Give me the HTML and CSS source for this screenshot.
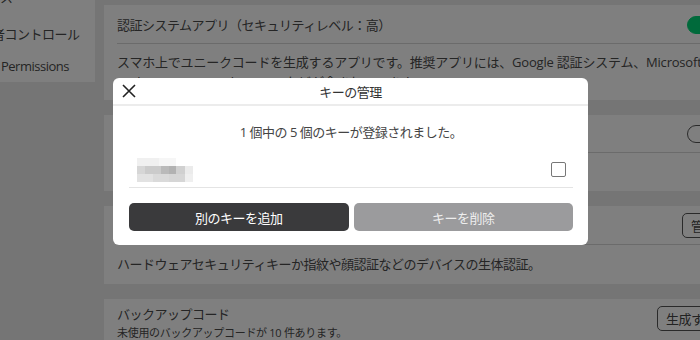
FILE: index.html
```html
<!DOCTYPE html>
<html lang="ja">
<head>
    <meta charset="UTF-8">
    <meta name="viewport" content="width=device-width, initial-scale=1.0">
    <title>キーの管理</title>
    <link rel="stylesheet" href="styles.css">
</head>
<body>
    <div class="page">
        <nav class="sidebar">
            <div class="nav-item top">ス</div>
            <div class="nav-item cut">保護者コントロール</div>
            <div class="nav-item">Permissions</div>
        </nav>

        <main class="content">
            <section class="card card-app">
                <div class="card-head">
                    <span class="card-title">認証システムアプリ（セキュリティレベル：高）</span>
                    <span class="toggle on"></span>
                </div>
                <p class="card-text">スマホ上でユニークコードを生成するアプリです。推奨アプリには、Google 認証システム、Microsoft Authenticator、Authy、Duo などが含まれています。</p>
            </section>

            <section class="card card-sms">
                <div class="card-head">
                    <span class="card-title">テキストメッセージ（セキュリティレベル：中）</span>
                    <span class="toggle"></span>
                </div>
                <p class="card-text">ログイン時に携帯電話へ確認コードを送信します。</p>
            </section>

            <section class="card card-keys">
                <div class="card-head">
                    <span class="card-title">セキュリティキー（セキュリティレベル：最高）</span>
                    <button class="outline-btn">管理</button>
                </div>
                <p class="card-text">ハードウェアセキュリティキーか指紋や顔認証などのデバイスの生体認証。</p>
            </section>

            <section class="card card-backup">
                <div class="backup-row">
                    <div>
                        <div class="card-title">バックアップコード</div>
                        <div class="card-sub">未使用のバックアップコードが 10 件あります。</div>
                    </div>
                    <button class="outline-btn">生成する</button>
                </div>
            </section>
        </main>
    </div>

    <div class="overlay">
        <div class="modal">
            <div class="modal-head">
                <svg class="close" width="14" height="14" viewBox="0 0 14 14">
                    <path d="M1 1 L13 13 M13 1 L1 13" stroke="#222" stroke-width="1.6" fill="none"/>
                </svg>
                <span class="modal-title">キーの管理</span>
            </div>
            <div class="modal-body">
                <p class="modal-info">1 個中の 5 個のキーが登録されました。</p>
                <div class="key-row">
                    <div class="key-name">
                        <span class="mosaic m1"></span>
                        <span class="mosaic m2"></span>
                        <span class="mosaic m3"></span>
                    </div>
                    <span class="checkbox"></span>
                </div>
                <div class="modal-actions">
                    <button class="btn btn-dark">別のキーを追加</button>
                    <button class="btn btn-gray">キーを削除</button>
                </div>
            </div>
        </div>
    </div>
</body>
</html>
```

FILE: styles.css
```css
body {
    margin: 0;
    width: 700px;
    height: 340px;
    overflow: hidden;
    background: #ebebeb;
    font-family: "Open Sans", "Noto Sans CJK JP", sans-serif;
    font-size: 13px;
    letter-spacing: -0.5px;
    color: #4a4a4a;
}

.page {
    display: flex;
    align-items: flex-start;
}

.sidebar {
    width: 95px;
    height: 82px;
    flex-shrink: 0;
    background: #fff;
    overflow: hidden;
}

.nav-item {
    height: 32px;
    line-height: 32px;
    white-space: nowrap;
    font-size: 13px;
}

.nav-item.top {
    margin-top: -14px;
    line-height: 22px;
}

.nav-item.cut {
    margin-left: -33px;
}

.nav-item:last-child {
    margin-left: 1px;
}

.content {
    margin-left: 9px;
    margin-top: 5px;
    width: 640px;
    flex-shrink: 0;
    display: flex;
    flex-direction: column;
    gap: 15px;
}

.card {
    background: #fff;
    padding: 0 0 0 13px;
}

.card-head {
    display: flex;
    align-items: center;
    justify-content: space-between;
    border-bottom: 1px solid #d6d6d6;
    white-space: nowrap;
}

.card-app .card-head {
    height: 37px;
    padding-top: 1px;
}

.card-sms .card-head {
    height: 36px;
    padding-top: 1px;
}

.card-keys .card-head {
    height: 37px;
    padding-top: 1px;
}

.card-title {
    font-size: 13px;
}

.card-text {
    margin: 0;
    line-height: 20px;
    white-space: nowrap;
    overflow: hidden;
    letter-spacing: -0.2px;
}

.card-app .card-text {
    padding: 8px 0;
    white-space: normal;
    width: 640px;
    height: 40px;
}

.card-sms .card-text {
    padding: 9px 0;
}

.card-keys .card-text {
    padding: 9px 0 10px;
    letter-spacing: -0.5px;
}

.toggle {
    width: 36px;
    height: 18px;
    border-radius: 9px;
    border: 1.5px solid #555;
    box-sizing: border-box;
    margin-right: 21px;
}

.toggle.on {
    background: #00d476;
    border-color: #00d476;
}

.outline-btn {
    font-family: inherit;
    font-size: 13px;
    letter-spacing: -0.5px;
    color: #444;
    background: #fff;
    border: 1px solid #555;
    border-radius: 5px;
    height: 25px;
    padding: 0 8px;
    margin-right: 19px;
}

.backup-row {
    display: flex;
    justify-content: space-between;
    align-items: flex-start;
    padding-top: 6px;
    height: 39px;
}

.card-backup .card-title {
    line-height: 18px;
}

.card-sub {
    font-size: 11px;
    line-height: 20px;
    letter-spacing: -0.3px;
}

.card-backup .outline-btn {
    margin-top: 1px;
}

.overlay {
    position: fixed;
    inset: 0;
    background: rgba(0, 0, 0, 0.5);
    display: flex;
    justify-content: center;
    align-items: flex-start;
    padding-top: 78px;
}

.modal {
    width: 475px;
    height: 167px;
    background: #fff;
    border-radius: 6px;
    margin-left: 1px;
}

.modal-head {
    position: relative;
    height: 26px;
    border-bottom: 2px solid #ececec;
    display: flex;
    align-items: center;
    justify-content: center;
}

.close {
    position: absolute;
    left: 9px;
    top: 6px;
}

.modal-title {
    color: #333;
    font-size: 13px;
}

.modal-body {
    padding: 0 15px 0 16px;
}

.modal-info {
    margin: 0;
    padding-top: 16px;
    height: 30px;
    line-height: 20px;
    text-align: center;
    color: #444;
}

.key-row {
    display: flex;
    align-items: center;
    justify-content: space-between;
    height: 35px;
    padding: 0 7px 0 8px;
    border-bottom: 1px solid #e4e4e4;
}

.key-name {
    width: 56px;
    display: flex;
    flex-direction: column;
}

.mosaic {
    height: 8px;
}

.m1 {
    background: linear-gradient(90deg, #f0f0f0 0 40%, #f6f6f6 40% 70%, #fff 70%);
}

.m2 {
    background: linear-gradient(90deg, #d6d6d6 0 14%, #cbcbcb 14% 42%, #bababa 42% 57%, #b2b2b2 57% 70%, #d0d0d0 70% 85%, #ebebeb 85%);
}

.m3 {
    background: linear-gradient(90deg, #e2e2e2 0 28%, #dadada 28% 57%, #d6d6d6 57% 85%, #efefef 85%);
}

.checkbox {
    width: 13px;
    height: 13px;
    border: 1px solid #777;
    border-radius: 2px;
}

.modal-actions {
    display: flex;
    gap: 5px;
    padding-top: 15px;
}

.btn {
    flex: 1;
    height: 28px;
    border: none;
    border-radius: 5px;
    font-family: inherit;
    font-size: 13px;
    letter-spacing: -0.5px;
}

.btn-dark {
    background: #3a3a3c;
    color: #fff;
}

.btn-gray {
    background: #9b9b9d;
    color: #eee;
}
```
